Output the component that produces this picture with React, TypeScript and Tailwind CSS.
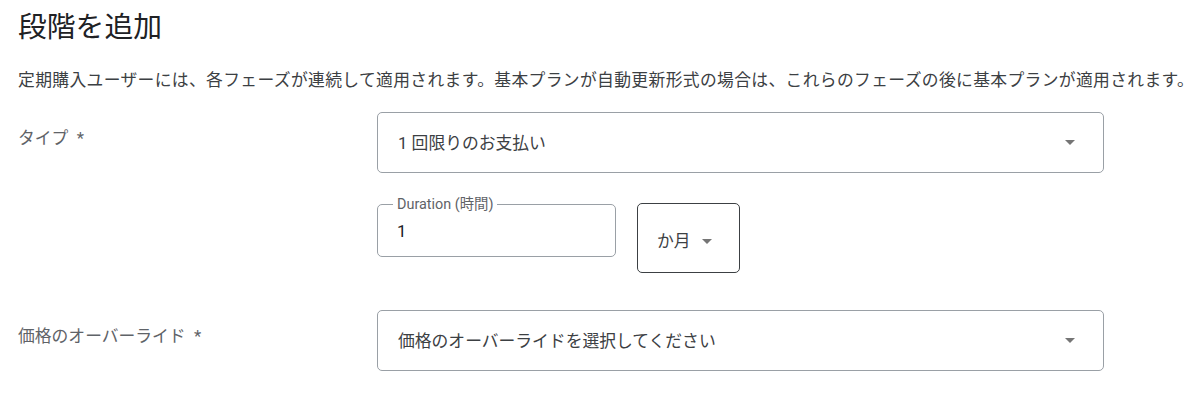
import React from "react";

const Arrow = ({ className = "" }: { className?: string }) => (
  <svg width="10" height="5" viewBox="0 0 10 5" className={className}>
    <path d="M0 0 L10 0 L5 5 Z" fill="#757575" />
  </svg>
);

const Select = ({ text }: { text: string }) => (
  <div className="flex h-[61px] w-[727px] items-center justify-between rounded-[5px] border border-[#9aa0a6] pl-[20px] pr-[28px]">
    <span className="text-[16.8px] leading-[24px] text-[#3c4043]">{text}</span>
    <Arrow />
  </div>
);

export default function App() {
  return (
    <div className="min-h-[418px] w-[1200px] bg-white pl-[18px] pt-[9px] font-[Roboto,'Noto_Sans_CJK_JP',sans-serif]">
      <h1 className="text-[28.8px] font-normal leading-[36px] text-[#202124]">段階を追加</h1>
      <p className="mt-[23px] whitespace-nowrap text-[16.8px] leading-[24px] tracking-[0.35px] text-[#3c4043]">
        定期購入ユーザーには、各フェーズが連続して適用されます。基本プランが自動更新形式の場合は、これらのフェーズの後に基本プランが適用されます。
      </p>

      <div className="mt-[20px] grid grid-cols-[359px_727px]">
        <div className="pt-[14px] text-[16.8px] leading-[24px] text-[#5f6368]">タイプ&nbsp;&nbsp;*</div>
        <Select text="1 回限りのお支払い" />

        <div />
        <div className="mt-[31px] flex items-start gap-[21px]">
          <div className="relative flex h-[53px] w-[239px] items-center rounded-[5px] border border-[#9aa0a6] pl-[19px]">
            <span className="absolute left-[15px] top-0 -translate-y-1/2 bg-white px-[4px] text-[14.4px] leading-[16px] text-[#5f6368]">
              Duration (時間)
            </span>
            <span className="text-[16.8px] leading-[24px] text-[#202124]">1</span>
          </div>
          <div className="-mt-[1px] flex h-[70px] w-[103px] items-center rounded-[5px] border border-[#3c4043] pl-[19px] pt-[6px]">
            <span className="text-[16.8px] leading-[24px] text-[#3c4043]">か月</span>
            <Arrow className="ml-[11px]" />
          </div>
        </div>

        <div className="mt-[37px] pt-[14px] text-[16.8px] leading-[24px] text-[#5f6368]">価格のオーバーライド&nbsp;&nbsp;*</div>
        <div className="mt-[37px]">
          <Select text="価格のオーバーライドを選択してください" />
        </div>
      </div>
    </div>
  );
}
